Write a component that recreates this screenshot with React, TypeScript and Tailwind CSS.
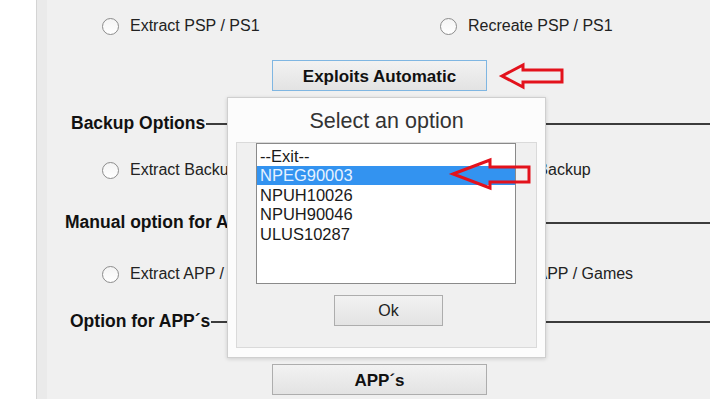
import React from "react";

const font = { fontFamily: '"Liberation Sans", Arial, sans-serif' };

function Radio({ label }: { label: string }) {
  return (
    <div className="flex items-center gap-[11px]">
      <div className="w-[17px] h-[17px] rounded-full border-[1.5px] border-[#8c8c8c] bg-gradient-to-b from-[#f4f4f4] to-[#ffffff] shrink-0" />
      <span className="text-[16px] text-[#222] whitespace-nowrap leading-none">{label}</span>
    </div>
  );
}

function RadioRow({ left, right, className }: { left: string; right: string; className: string }) {
  return (
    <div className={"flex items-center pl-[55px] h-[24px] " + className}>
      <div className="w-[338px]">
        <Radio label={left} />
      </div>
      <Radio label={right} />
    </div>
  );
}

function GroupLabel({ text, pl, className }: { text: string; pl: string; className: string }) {
  return (
    <div className={"flex items-center h-[24px] " + pl + " " + className}>
      <span className="text-[17.5px] font-bold text-[#111] whitespace-nowrap leading-none">{text}</span>
      <div className="flex-1 h-[2px] bg-[#3c3c3c] ml-[1px]" />
    </div>
  );
}

function WinButton({ text, focused, className }: { text: string; focused?: boolean; className: string }) {
  return (
    <div
      className={
        "ml-[225px] w-[215px] h-[31px] flex items-center justify-center border bg-gradient-to-b from-[#f2f2f2] to-[#e3e3e3] " +
        (focused ? "border-[#7fb6e2] " : "border-[#adadad] ") +
        className
      }
    >
      <span className="text-[17px] font-bold text-[#111] leading-none pt-[1px]">{text}</span>
    </div>
  );
}

export default function App() {
  const items = ["--Exit--", "NPEG90003", "NPUH10026", "NPUH90046", "ULUS10287"];
  return (
    <div className="relative w-[710px] h-[399px] overflow-hidden bg-white flex" style={font}>
      <div className="w-[36px] shrink-0 bg-white" />
      <div className="flex-1 flex border-l border-[#d4d4d4]">
        <div className="w-[10px] shrink-0 bg-[#eaeaea]" />
        <div className="flex-1 bg-[#f0f0f0] flex flex-col">
          <RadioRow left="Extract PSP / PS1" right="Recreate PSP / PS1" className="mt-[14px]" />
          <WinButton text="Exploits Automatic" focused className="mt-[22px]" />
          <GroupLabel text="Backup Options" pl="pl-[24px]" className="mt-[21px]" />
          <RadioRow left="Extract Backup" right="Recreate Backup" className="mt-[22px]" />
          <GroupLabel text="Manual option for APP´s" pl="pl-[18px]" className="mt-[29px]" />
          <RadioRow left="Extract APP / Games" right="Recreate APP / Games" className="mt-[27px]" />
          <GroupLabel text="Option for APP´s" pl="pl-[23px]" className="mt-[24px]" />
          <WinButton text="APP´s" className="mt-[30px]" />
        </div>
      </div>

      {/* Dialog */}
      <div className="absolute left-[227px] top-[97px] w-[319px] h-[261px] bg-[#fcfcfc] border border-[#cfcfcf] shadow-[0_1px_4px_rgba(0,0,0,0.15)] flex flex-col">
        <div className="h-[44px] flex items-center justify-center pt-[3px]">
          <span className="text-[21.5px] text-[#333] leading-none">Select an option</span>
        </div>
        <div className="mx-[8px] flex-1 mb-[9px] bg-[#f0f0f0] border border-[#dadada] flex flex-col">
          <div className="ml-[19px] w-[260px] h-[141px] bg-white border border-[#8a8a8a] pt-[2px]">
            {items.map((it, i) => (
              <div
                key={it}
                className={
                  "h-[19.5px] flex items-center pl-[3px] text-[16.5px] leading-none " +
                  (i === 1 ? "bg-[#3393f0] text-[#e6f2ff]" : "text-[#1a1a1a]")
                }
              >
                {it}
              </div>
            ))}
          </div>
          <div className="ml-[97px] mt-[11px] w-[109px] h-[31px] border border-[#adadad] bg-gradient-to-b from-[#f2f2f2] to-[#e3e3e3] flex items-center justify-center">
            <span className="text-[16px] text-[#222] leading-none">Ok</span>
          </div>
        </div>
      </div>

      {/* Annotation arrows */}
      <svg className="absolute left-0 top-0" width="710" height="399" viewBox="0 0 710 399">
        <polygon
          points="502,76 523,65 523,70 562,70 562,82 523,82 523,87"
          fill="none"
          stroke="#e3121c"
          strokeWidth="3"
          strokeLinejoin="miter"
        />
        <polygon
          points="453,174 490,160 490,167 529,167 529,182 490,182 490,188"
          fill="none"
          stroke="#e3121c"
          strokeWidth="3"
          strokeLinejoin="miter"
        />
      </svg>
    </div>
  );
}
